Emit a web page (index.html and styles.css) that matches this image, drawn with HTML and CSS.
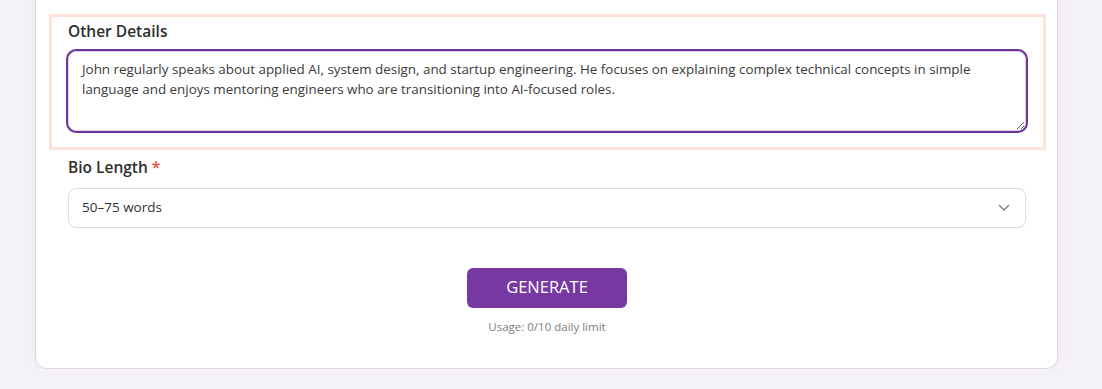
FILE: index.html
```html
<!DOCTYPE html>
<html lang="en">
<head>
<meta charset="utf-8">
<title>Bio Generator</title>
<link rel="stylesheet" href="styles.css">
</head>
<body>
<div class="card">
    <div class="field highlight">
        <label class="label" for="details">Other Details</label>
        <textarea id="details" class="textarea">John regularly speaks about applied AI, system design, and startup engineering. He focuses on explaining complex technical concepts in simple language and enjoys mentoring engineers who are transitioning into AI-focused roles.</textarea>
    </div>

    <div class="field">
        <label class="label" for="length">Bio Length <span class="req">*</span></label>
        <div class="select">
            <span>50–75 words</span>
            <svg class="chevron" viewBox="0 0 12 8" width="12" height="8">
                <path d="M1.5 1.5 L6 6 L10.5 1.5" fill="none" stroke="#7a7a7a" stroke-width="1.4" stroke-linecap="round" stroke-linejoin="round"/>
            </svg>
        </div>
    </div>

    <div class="actions">
        <button class="btn">GENERATE</button>
        <div class="usage">Usage: 0/10 daily limit</div>
    </div>
</div>
</body>
</html>
```

FILE: styles.css
```css
body {
    margin: 0;
    background: #f5f2f7;
    font-family: "Open Sans", "Noto Sans", sans-serif;
    color: #2f2f2f;
    overflow: hidden;
}

.card {
    width: 1023px;
    box-sizing: border-box;
    margin: -24px 0 0 35px;
    padding: 37px 31px 33px 32px;
    background: #fff;
    border: 1px solid #e2d6ec;
    border-radius: 12px;
    box-shadow: 0 2px 10px rgba(120, 60, 160, 0.06);
}

.field {
    display: flex;
    flex-direction: column;
}

.highlight {
    margin: 0 -20px 0 -19px;
    padding: 2px 17px 16px 16px;
    border: 3px solid #fde3dc;
}

.label {
    font-size: 15.5px;
    font-weight: 600;
    line-height: 24px;
    color: #2e2e2e;
    margin-bottom: 8px;
}

.req {
    color: #e84a4a;
}

.textarea {
    height: 80px;
    box-sizing: border-box;
    padding: 7px 13px;
    font-family: inherit;
    font-size: 13.4px;
    line-height: 20px;
    color: #3a3a3a;
    border: 1px solid #dcd0ea;
    border-radius: 8px;
    box-shadow: 0 0 0 2px #70359c;
    outline: none;
    resize: vertical;
}

.highlight + .field {
    margin-top: 5px;
}

.highlight + .field .label {
    margin-bottom: 9px;
}

.select {
    height: 40px;
    box-sizing: border-box;
    display: flex;
    align-items: center;
    justify-content: space-between;
    padding: 0 15px 3px 13px;
    border: 1px solid #e2d6ec;
    border-radius: 8px;
    font-size: 13.5px;
    color: #333;
}

.chevron {
    margin-top: 3px;
}

.actions {
    display: flex;
    flex-direction: column;
    align-items: center;
    margin-top: 40px;
}

.btn {
    width: 160px;
    height: 40px;
    border: none;
    border-radius: 6px;
    background: #7838a2;
    color: #fff;
    font-family: inherit;
    font-size: 16.5px;
    padding: 0 0 3px;
}

.usage {
    margin-top: 11px;
    font-size: 11.5px;
    line-height: 16px;
    color: #7d7d7d;
}
```
